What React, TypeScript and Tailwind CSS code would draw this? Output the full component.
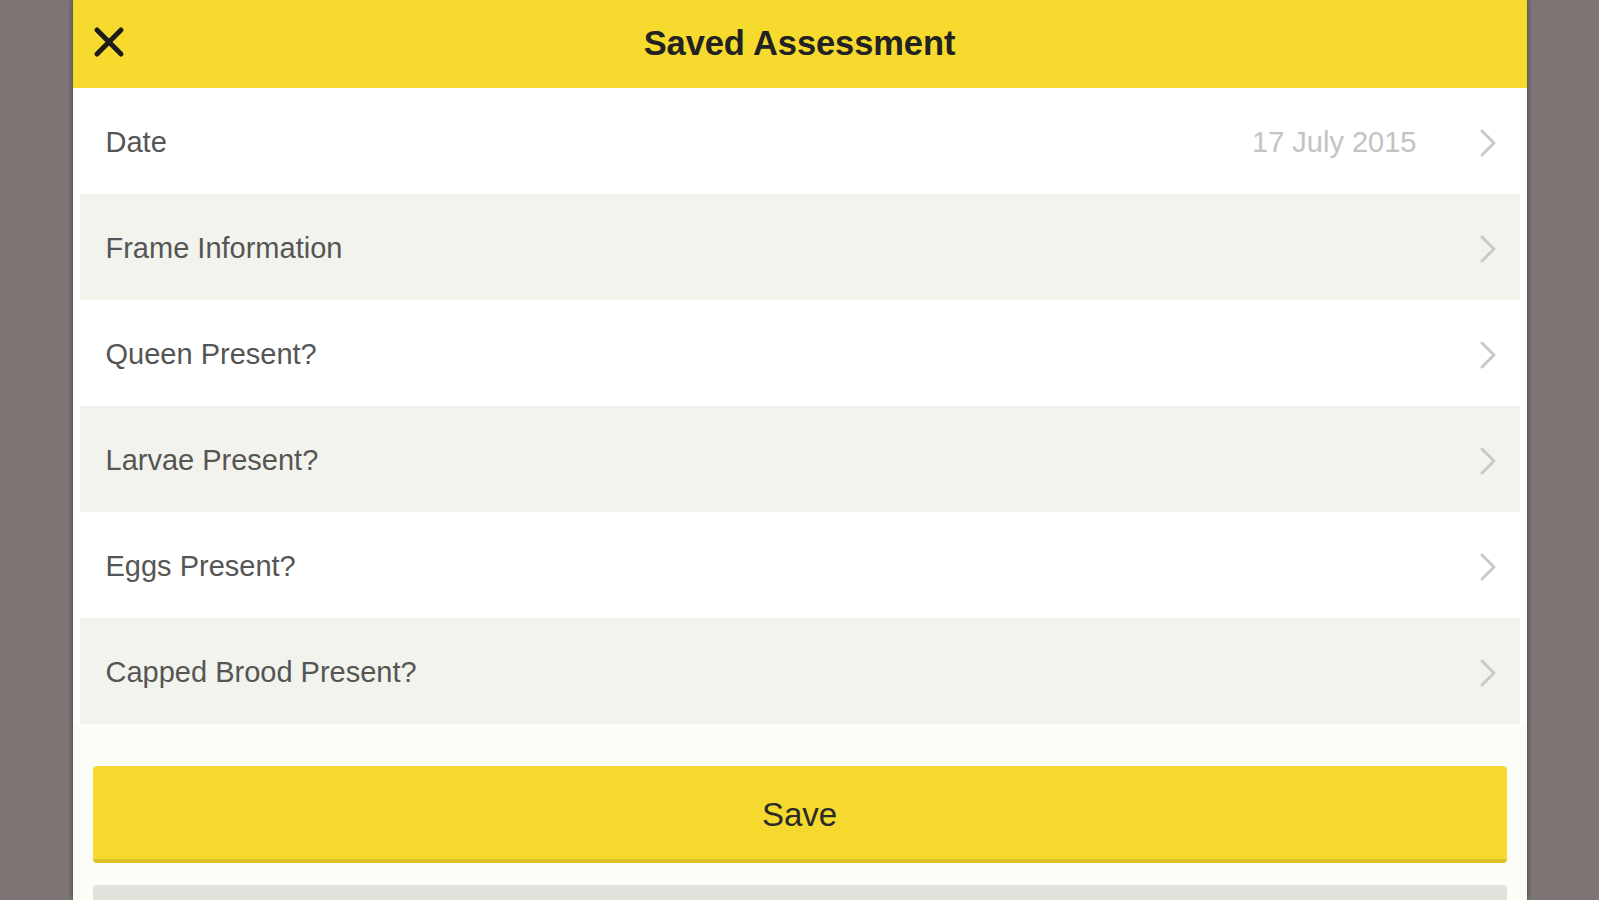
import React from 'react';

const rows = [
  { label: 'Date', value: '17 July 2015' },
  { label: 'Frame Information' },
  { label: 'Queen Present?' },
  { label: 'Larvae Present?' },
  { label: 'Eggs Present?' },
  { label: 'Capped Brood Present?' },
];

const Chevron = () => (
  <svg width="20" height="30" viewBox="0 0 20 30" fill="none" className="shrink-0">
    <polyline points="4,3 16,15 4,27" stroke="#c9c9c6" strokeWidth="3" strokeLinecap="round" strokeLinejoin="round" />
  </svg>
);

const CloseIcon = () => (
  <svg width="32" height="32" viewBox="0 0 32 32" fill="none">
    <line x1="4" y1="4" x2="28" y2="28" stroke="#1c1c1c" strokeWidth="5" strokeLinecap="round" />
    <line x1="28" y1="4" x2="4" y2="28" stroke="#1c1c1c" strokeWidth="5" strokeLinecap="round" />
  </svg>
);

export default function App() {
  return (
    <div className="w-full h-[900px] bg-[#7d7675] flex justify-center overflow-hidden font-['Liberation_Sans',Arial,sans-serif]">
      <div className="w-[1454px] h-full bg-[#fdfdf7] flex flex-col shadow-[0_0_5px_rgba(40,30,30,0.7)]">
        {/* header */}
        <div className="h-[88px] bg-[#f7da2e] flex items-center px-[20px] shrink-0">
          <button className="w-[32px] h-[32px] flex items-center justify-center -mt-[4px]">
            <CloseIcon />
          </button>
          <h1 className="flex-1 text-center text-[34.5px] font-bold text-[#222] tracking-[-0.1px]">
            Saved Assessment
          </h1>
          <div className="w-[32px]" />
        </div>

        {/* rows */}
        <div className="bg-white flex flex-col">
          {rows.map((row, i) => (
            <div
              key={row.label}
              className={`h-[106px] flex items-center pt-[3px] ${
                i % 2 === 1 ? 'bg-[#f3f3ed] mx-[7px] pl-[26px] pr-[22px]' : 'bg-white pl-[33px] pr-[29px]'
              }`}
            >
              <span className="flex-1 text-[29px] text-[#555]">{row.label}</span>
              {row.value && <span className="text-[29px] text-[#c3c3c0] mr-[61px]">{row.value}</span>}
              <Chevron />
            </div>
          ))}
        </div>

        {/* actions */}
        <div className="flex flex-col gap-[22px] px-[20px] pt-[42px]">
          <button className="h-[97px] w-full rounded-[4px] bg-[#f6d92e] border-b-[4px] border-[#dcc127] text-[33px] text-[#2a2a2a] flex items-center justify-center pt-[4px]">
            Save
          </button>
          <button className="h-[97px] w-full rounded-[4px] bg-[#e1e1dc] border-b-[4px] border-[#d0d0cb]" />
        </div>
      </div>
    </div>
  );
}
